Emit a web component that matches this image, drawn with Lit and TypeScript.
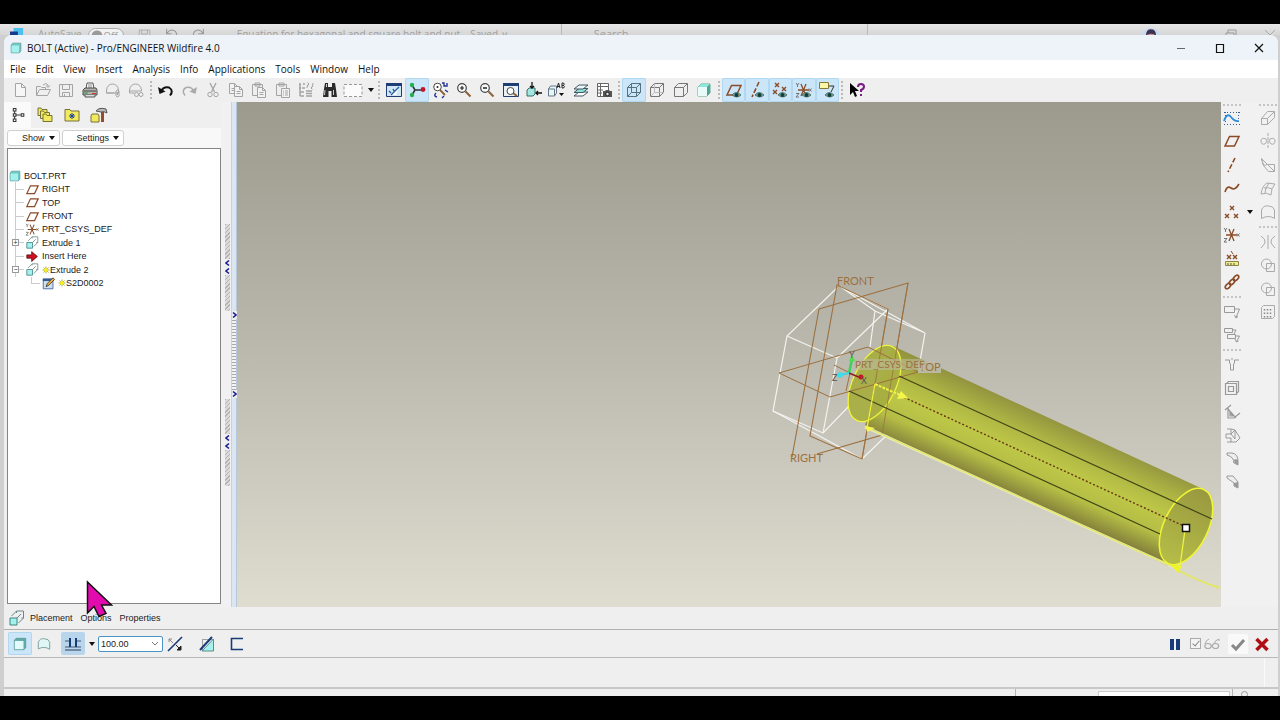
import { LitElement, html, svg, css, SVGTemplateResult, TemplateResult } from "lit";
import { customElement, property } from "lit/decorators.js";

const G = "#a4a4a4";
const BR = "#8a4b26";
const NAVY = "#173a78";

const eye = svg`<path d="M6 13q4-5 9 0q-4 4-9 0z" fill="#7fa39b" stroke="#3d6560" stroke-width=".8"/><circle cx="10.5" cy="13" r="2" fill="#123f38"/>`;
const wire = (c: string) => svg`<path d="M1.500 5.500h9v9h-9zM1.500 5.500l4-4h9l-4 4M14.500 1.500v9l-4 4" fill="none" stroke=${c}/>`;
const cube = (front: string, side: string) => svg`<path d="M1.500 4l2-2.500h11v10.500l-2 2.500h-11z" fill=${side} stroke="#5b9491" stroke-width=".9"/><path d="M2 4.500h10v9.500H2z" fill=${front}/>`;
const plane = svg`<path d="M5.500 3.500h9.500l-4.500 9.500H1z" fill="none" stroke=${BR} stroke-width="1.500"/>`;
const cross = (x: number, y: number) => svg`<path d=${`M${x - 2} ${y - 2}l4 4m0-4l-4 4`} stroke=${BR} stroke-width="1.400"/>`;
const csys = svg`<path d="M2 8h11M5 2l5 12M10 2L5 14" stroke=${BR} stroke-width="1.300" fill="none"/><path d="M0 1l1.500 2L3 1M1.500 3v2M13 6.500l2.500 3m0-3l-2.500 3M0 11.500h3L0 15h3" stroke="#666" fill="none" stroke-width=".9"/>`;
const lens = svg`<path d="M9.500 9.500l5 5" stroke="#8a6238" stroke-width="2"/><circle cx="6" cy="6" r="4.300" fill="#f7fbfb" stroke="#444" stroke-width="1.200"/>`;
const extrude = svg`<path d="M1 8h7v7H1z" fill="#a4f1ee" stroke="#3f8482"/><path d="M2.500 6l5-5h7v7l-5 5M7.500 1v2M14.500 8h-2" fill="none" stroke="#6d8786"/><path d="M8 8l4-4" fill="none" stroke="#6d8786"/>`;
const folder = (x: number, y: number) => svg`<path d=${`M${x} ${y}h3l1 1.500h5v6h-9z`} fill="#f1ea5c" stroke="#77713a"/>`;
const page = (x: number, y: number) => svg`<path d=${`M${x} ${y}h5l3 3v7h-8zM${x + 5} ${y}v3h3M${x + 2} ${y + 5}h4m-4 2h4`} fill="#f2f2f2" stroke=${G}/>`;

const icons: Record<string, SVGTemplateResult> = {
  newFile: svg`<path d="M3.500 1.500h6l4 4v9h-10zM9.500 1.500v4h4" fill="#f6f6f6" stroke=${G}/>`,
  open: svg`<path d="M1.500 13.500v-9h4l1 1h4v2M1.500 13.500l3-6h11l-3 6zM8 3q3-3 5 0v2m-2-1.500l2 2 2-2" fill="none" stroke=${G}/>`,
  save: svg`<path d="M1.500 2.500h13v12h-13zM4.500 2.500v5h7v-5M4.500 14.500v-4h7v4M6.500 12v2" fill="none" stroke=${G}/>`,
  print: svg`<path d="M4 7l1-6h6l1 6" fill="#fff" stroke="#555"/><path d="M6 3h4M6 5h4" stroke="#888"/><path d="M1 8l2-2h11l1 2v5H1z" fill="#b3b3ad" stroke="#4b4b4b"/><path d="M2 9h12" stroke="#444"/><path d="M2 11h4" stroke="#2c9a3a"/><path d="M10 11.500h4" stroke="#d03a2a"/><path d="M3 13v2h10v-2" fill="#ddd" stroke="#555"/>`,
  mailClip: svg`<path d="M1.500 8q1-6 6-6t6 6v3h-12zM1.500 11h8" fill="none" stroke=${G}/><path d="M11 9q2-2 3 0v5q-1 2-3 0zM12.500 10v3" fill="none" stroke=${G}/>`,
  mailLink: svg`<path d="M1.500 8q1-6 6-6t6 6v1h-12zM1.500 9v2h5" fill="none" stroke=${G}/><circle cx="8.500" cy="12.500" r="2" fill="none" stroke=${G}/><circle cx="13" cy="12.500" r="2" fill="none" stroke=${G}/>`,
  undo: svg`<path d="M3 9q3-5 8-3.500q5 3 1 8" fill="none" stroke="#111" stroke-width="2"/><path d="M0 5l1.500 7 6-2.500z" fill="#111"/>`,
  redo: svg`<path d="M13 9q-3-5-8-3.500q-5 3-1 8" fill="none" stroke="#aaa" stroke-width="1.500"/><path d="M16 5l-1.500 7-6-2.500z" fill="#aaa"/>`,
  undoThin: svg`<path d="M2 1v6h6M2 7q4-6 9-4t2 9l-4 4" fill="none" stroke="#999" stroke-width="1.300"/>`,
  redoThin: svg`<path d="M14 1v6H8M14 7q-4-6-9-4t-2 9l4 4" fill="none" stroke="#999" stroke-width="1.300"/>`,
  cut: svg`<path d="M5 1l4.500 9M11 1L6.500 10" stroke=${G} stroke-width="1.300"/><circle cx="5" cy="12.500" r="2.200" fill="none" stroke=${G}/><circle cx="11" cy="12.500" r="2.200" fill="none" stroke=${G}/>`,
  copy: svg`${page(1.5, 1.5)}${page(6.5, 4.5)}`,
  paste: svg`<path d="M1.500 2.500h10v11h-10zM4 1h5v3H4z" fill="#eee" stroke=${G}/>${page(6.5, 5.5)}`,
  pasteSp: svg`<path d="M1.500 2.500h10v11h-10zM4 1h5v3H4z" fill="#eee" stroke=${G}/><path d="M6.500 6.500h8v9h-8zM8 9h1m1 0h3M8 11h1m1 0h3M8 13h1m1 0h3" fill="#f2f2f2" stroke=${G}/>`,
  regen: svg`<path d="M1 2h2m2 0h2M1 6h2m1 0h3M2 2v12M2 10h4M2 14h4" stroke=${G} stroke-width="1.500"/><path d="M8 9h6M8 11.500h6M8 14h6" stroke=${G} stroke-width="1.300"/><path d="M9 6q0-4 2-4m-1.500-1.500L11 2 9.500 4M15 1q0 5-2 5m1.500-2L13 6l1.500 1.500" fill="none" stroke=${G}/>`,
  find: svg`<path d="M3 1h3v4h4V1h3l1 6 1 8H9.500V9h-3v6H1l1-8z" fill="#2b2b2b"/><path d="M3 8l-.5 5M11.500 8v5M4.500 2v3" stroke="#ccc"/>`,
  marquee: svg`<path d="M-1 2.500h18v12H-1z" fill="#fbfbfb" stroke="#999" stroke-dasharray="3 2"/>`,
  repaint: svg`<path d="M.500 1.500h15v13H.500z" fill="#cfe6f7" stroke="#1e3d75"/><path d="M0 1h16v3H0z" fill="#1e3d75"/><path d="M4 13l9-8-3 8z" fill="#fff"/><path d="M5 13l8-8M3 9l2 2m2-4l1 2" stroke="#2a5ea2" stroke-width="1.400"/>`,
  spin: svg`<path d="M3 3l3 5-3 5M6 8h8" fill="none" stroke="#333" stroke-width="1.600"/><circle cx="3" cy="3" r="2.200" fill="#24b14b"/><circle cx="3" cy="13" r="2.200" fill="#24b14b"/><circle cx="14" cy="7.500" r="2.400" fill="#c01828"/>`,
  orient: svg`<path d="M8 8l5 5" stroke="#8a6238" stroke-width="1.800"/><circle cx="5.500" cy="5" r="3.800" fill="#fff" stroke="#444"/><circle cx="5.500" cy="5" r="1" fill="#222"/><path d="M10 1h2v3h3V1M5 15q-4-1-1-4m6 5l2-2m1-6l3 2" stroke="#23349a" stroke-width="1.400" fill="none"/>`,
  zoomIn: svg`${lens}<path d="M4 6h4M6 4v4" stroke="#222" stroke-width="1.200"/>`,
  zoomOut: svg`${lens}<path d="M4 6h4" stroke="#222" stroke-width="1.400"/>`,
  refit: svg`<path d="M.500 1.500h15v13H.500z" fill="#e9f1f4" stroke="#1e3d75"/><path d="M0 1h16v3H0z" fill="#1e3d75"/><path d="M10 11l4 3" stroke="#8a6238" stroke-width="2"/><circle cx="7.500" cy="9" r="3.500" fill="#fff" stroke="#444"/>`,
  reorient: svg`<path d="M1 8l2-2h6v6l-2 2H1z" fill="#a4e6e0" stroke="#356f6b"/><path d="M6 0v6M4 4l2 2 2-2M16 11h-6m2-2l-2 2 2 2" stroke="#111" stroke-width="1.300" fill="none"/>`,
  views: svg`<path d="M-.500 7l2-3h6v7l-2 3h-6zM-.500 7h6v7" fill="#e6f6f4" stroke="#678"/><path d="M8 6l1.500-5L11 6M8.500 4.500h2M13 1v5h1.500q2-1.500 0-2.500 1.500-1.500 0-2.500zM13 3.500h2" stroke="#222" fill="none" stroke-width="1"/><path d="M10 11h5l-2.500 3z" fill="#111"/>`,
  layers: svg`<path d="M1 14l5-4h9l-5 4z" fill="#fff" stroke="#456"/><path d="M1 10.500l5-4h9l-5 4z" fill="#8de0d4" stroke="#456"/><path d="M1 7l5-4h9l-5 4z" fill="#e9f8f6" stroke="#456"/>`,
  viewMgr: svg`<path d="M1.500 1.500h11v13h-11zM1 4.500h11M4.500 1v13M1 8h6M1 11h5" fill="#fff" stroke="#666"/><path d="M7 9h2l1-1h3l1 1h2v6H7z" fill="#555"/><circle cx="11.500" cy="12" r="1.800" fill="#ddd" stroke="#222"/>`,
  wireframe: svg`${wire("#56707c")}<path d="M5.500 1.500v9h9M1.500 14.500l4-4" fill="none" stroke="#56707c"/>`,
  hidden: svg`${wire("#777")}<path d="M5.500 1.500v9h9M1.500 14.500l4-4" fill="none" stroke="#bbb"/>`,
  noHidden: wire("#777"),
  shaded: svg`<path d="M2 5l3-3h9v9l-3 3H2z" fill="#49a59c" stroke="#6a8"/><path d="M2 5l3-3h9l-3 3z" fill="#8ce8dd"/><path d="M2 5h9v9H2z" fill="#e9fbf9"/>`,
  planeEye: svg`${plane}${eye}`,
  axisEye: svg`<path d="M10 0L3 15" stroke=${BR} stroke-width="1.600" stroke-dasharray="5 2"/>${eye}`,
  pointEye: svg`${cross(5, 3)}${cross(3, 10)}${cross(12, 7)}${eye}`,
  csysEye: svg`${csys}${eye}`,
  noteEye: svg`<path d="M.500 .500h9v6h-9z" fill="#fbf7a6" stroke="#8a7a3a"/><path d="M10 4h5l-3 6" stroke="#333" fill="none"/>${eye}`,
  help: svg`<path d="M1 1v12l3-3 2 5 2-1-2-5h4z" fill="#000"/><path d="M9 5q0-3 3-3t3 2.500-3 3.500v2M12 12v2" fill="none" stroke="#7a1b86" stroke-width="2"/>`,
  sketch: svg`<path d="M0 2.500h16M0 14.500h16M1.500 2v12M14.500 2v12" stroke="#3a5f8c" stroke-dasharray="1 2"/><path d="M0 11q3-9 7-4t8 4" fill="none" stroke="#2b8adb" stroke-width="1.800"/>`,
  plane,
  axis: svg`<path d="M11 1L4 15" stroke=${BR} stroke-width="1.600" stroke-dasharray="5 2"/>`,
  curve: svg`<path d="M1 12q2-7 6-4t8-4" fill="none" stroke=${BR} stroke-width="1.600"/>`,
  points: svg`${cross(8, 4)}${cross(3, 12)}${cross(12, 12)}`,
  csys,
  analysis: svg`${cross(5, 6)}${cross(11, 6)}<path d="M7 0l2 3" stroke=${BR}/><path d="M1.500 10.500h13v4h-13z" fill="#f0ee86" stroke="#8a8448"/><path d="M4 12v2m3-2v2m3-2v2" stroke="#555"/>`,
  chain: svg`<g fill="none" stroke=${BR} stroke-width="1.600"><ellipse cx="4" cy="12" rx="3.300" ry="2" transform="rotate(-45 4 12)"/><ellipse cx="8" cy="8" rx="3.300" ry="2" transform="rotate(-45 8 8)"/><ellipse cx="12" cy="4" rx="3.300" ry="2" transform="rotate(-45 12 4)"/></g>`,
  note1: svg`<path d="M.500 2.500h10v6h-10zM10 5h5.500l-3.500 9m-1.500-3l1.500 3 2-1.500" fill="none" stroke="#999"/>`,
  note2: svg`<path d="M.500 1.500h8v4h-8zM3.500 7.500h8v4h-8zM9 3h3l-2 4M12 9h3.500l-3 6m-1.500-3l1.500 3 2-1" fill="none" stroke="#999"/>`,
  hole: svg`<path d="M1 3h4.500v3l1 1v6h3V7l1-1V3H15M8 1v2" fill="none" stroke="#999"/>`,
  shell: svg`<path d="M2.500 3.500l2-2h10v10l-2 2M1.500 3.500h11v11h-11zM4.500 6.500h5v5h-5z" fill="none" stroke="#999" stroke-width="1.200"/>`,
  rib: svg`<path d="M1 6l6-5M4 4v10h6l6-5M4 5l8 9M6 9v3h3z" fill="none" stroke="#999" stroke-width="1.200"/>`,
  draft: svg`<path d="M3 2h4l4 1 5 8-4 4H3M7 2v5l4-4v9L7 7H2v4h5v4" fill="none" stroke="#999"/>`,
  round: svg`<path d="M3 2h5q6 1 6 8v4l-4-2q0-6-7-8zM10 12V9l4 1" fill="#eee" stroke="#999"/><path d="M11 8l3 1v5l-3-2z" fill="#999"/>`,
  chamfer: svg`<path d="M3 2h6l5 6v6l-4-2V9L3 4z" fill="#eee" stroke="#999"/><path d="M10 9l4-1v6l-4-2z" fill="#999"/>`,
  extrudeG: svg`<path d="M1.500 8.500h6v6h-6zM1.500 8.500l6-7h7v6l-7 7M7.500 8.500l7-7" fill="none" stroke="#aaa"/>`,
  revolve: svg`<path d="M8 0v16" stroke="#aaa" stroke-dasharray="3 1"/><path d="M6 6q-5-2-5 2t4 3l2-3zM10 6q5-2 5 2t-4 3l-2-3z" fill="none" stroke="#aaa"/>`,
  sweep: svg`<path d="M1.500 1.500l6 6h7v7h-6l-5-6zM1.500 1.500l2 7M7.500 7.500l-4 1M14.500 14.500l-7-7" fill="none" stroke="#aaa"/>`,
  boundary: svg`<path d="M1 13q1-8 6-11l8 1q-4 4-4 11-4-3-10-1zM4 7q5-1 8 1M9 2q-4 5-4 10" fill="none" stroke="#aaa"/>`,
  style: svg`<path d="M1.500 14.500V6q2-5 7-4 5 0 6 4v8.500q-6-4-13 0z" fill="none" stroke="#aaa"/>`,
  mirror: svg`<path d="M8 1v14" stroke="#aaa"/><path d="M1 2q5 3 4 7l-4 5M15 2q-5 3-4 7l4 5" fill="none" stroke="#aaa"/>`,
  merge: svg`<circle cx="6.500" cy="7" r="5" fill="none" stroke="#aaa"/><path d="M6.500 6.500h8v8h-8z" fill="none" stroke="#aaa"/>`,
  pattern: svg`<path d="M1.500 3.500l2-2h11v11l-2 2h-11z" fill="none" stroke="#aaa"/><path d="M4.500 5v9M7.500 5v9M10.500 5v9" stroke="#888" stroke-width="1.500" stroke-dasharray="1.500 2"/>`,
  model: svg`<g fill="#fff" stroke="#333" stroke-width="1.200"><path d="M3 2v12M4 8h6"/><path d="M1.500 .500h3v3h-3zM1.500 6.500h3v3h-3zM1.500 12.500h3v3h-3zM10.500 6.500h3v3h-3z"/></g>`,
  folders: svg`${folder(1, 1)}${folder(3.5, 4)}${folder(6, 7)}`,
  favorites: svg`<path d="M1 4V2.500h5L7 4h8v10H1z" fill="#f1ea5c" stroke="#77713a"/><path d="M8 6v6M5 9h6M6 7l4 4m0-4l-4 4" stroke="#1c3f92"/>`,
  connect: svg`<path d="M0 9l1-2h6l1 2v6H0z" fill="#f1ea5c" stroke="#77713a"/><path d="M10 4h3v11h-3z" fill="#9a4a2a"/><path d="M5 4q3-4 10-2l1 4q-3-2-6-1z" fill="#bbb" stroke="#555"/>`,
  part: cube("#a4f1ee", "#6dc9c4"),
  extrude,
  insert: svg`<path d="M1 6h6V2l7 6-7 6v-4H1z" fill="#d01020" stroke="#5a0a10"/>`,
  sketchNode: svg`<path d="M1.500 2.500h12v12h-12z" fill="#cfe0f0" stroke="#345a94"/><path d="M1 2h13v3H1z" fill="#345a94"/><path d="M5 12l1.500-4 7-7 2 2-7 7z" fill="#f0b13a" stroke="#333"/>`,
  surface: svg`<path d="M1.500 13.500V6q2-5 7-4 5 0 6 4v8q-6-4-13-.500z" fill="#e1f7f5" stroke="#6f9995"/>`,
  solid: cube("#e2fafa", "#62aaa8"),
  depth: svg`<path d="M0 5h4M12 5h4M0 11h16" stroke="#445a72" stroke-width="1.200"/><path d="M0 14h16" stroke="#445a72" stroke-width="1.200"/><path d="M5 2v9M11 2v9" stroke=${NAVY} stroke-width="2"/>`,
  flip: svg`<path d="M1 15L15 1" stroke=${NAVY} stroke-width="1.600"/><path d="M2 3h3M2 3v3M2 3l4 4" stroke="#888" fill="none"/><path d="M14 10v4h-4zM9 9l4 4" fill="#222" stroke="#222"/>`,
  remove: svg`<path d="M3.500 3.500h11v11h-11z" fill="none" stroke="#555" stroke-dasharray="1 1"/><path d="M14.500 3v12H3z" fill="#a4f1ee" stroke="#5c8f8a"/><path d="M1 14L13 1" stroke=${NAVY} stroke-width="2"/>`,
  thicken: svg`<path d="M14 2.500H2.500v11H14" fill="none" stroke=${NAVY} stroke-width="1.600"/>`,
  pause: svg`<path d="M3 3h4v11H3zM9 3h4v11H9z" fill=${NAVY}/>`,
  glasses: svg`<path d="M1 8q1-4 4-5M10 8q1-4 5-5v2" fill="none" stroke="#aaa"/><ellipse cx="4" cy="10" rx="3.200" ry="2.500" fill="none" stroke="#aaa" stroke-width="1.200"/><ellipse cx="11.500" cy="10" rx="3.200" ry="2.500" fill="none" stroke="#aaa" stroke-width="1.200"/>`,
  accept: svg`<path d="M2 9l4 4 8-9" fill="none" stroke="#888" stroke-width="3"/>`,
  cancel: svg`<path d="M2.500 3l11 11M13.500 3l-11 11" stroke="#b00d14" stroke-width="3.500"/>`,
  person: svg`<circle cx="8" cy="8" r="8" fill="#c9d8f0"/><circle cx="8" cy="7" r="4" fill="#c98f8f"/><path d="M4 6q0-5 4-5t4 5q-4-3-8 0z" fill="#3d3152"/><path d="M3 16q5-6 10 0z" fill="#c07a9a"/>`,
  word: svg`<path d="M4 0h11v15H4z" fill="#4fc0ee"/><path d="M0 4h9v9H0z" fill="#143a8c"/>`,
  min: svg`<path d="M4 8.500h8" stroke="#666"/>`,
  max: svg`<path d="M4.500 4.500h7v8h-7z" fill="none" stroke="#111" stroke-width="1.200"/>`,
  restore: svg`<path d="M3 5h8v8H3zM5 5V2h8v8h-2" fill="none" stroke="#999"/>`,
  close: svg`<path d="M4 4l8 8M12 4l-8 8" stroke="#111" stroke-width="1.200"/>`,
  closeThin: svg`<path d="M3 2l10 10M13 2L3 12" stroke="#aaa"/>`,
  spark: svg`<path d="M8 1v14M1 8h14M3 3l10 10M13 3L3 13" stroke="#8b8a20" stroke-width="1.500"/><circle cx="8" cy="8" r="4" fill="#f4f020"/>`,
};

@customElement("app-icon")
export class AppIcon extends LitElement {
  @property() name = "";
  @property({ type: Number }) size = 16;
  static styles = css`
    :host { display: inline-flex; flex: none; }
    svg { display: block; overflow: visible; }
  `;
  render() {
    return html`<svg width=${this.size} height=${this.size} viewBox="0 0 16 16" aria-hidden="true">${icons[this.name]}</svg>`;
  }
}

const PITCH = 23.4;
type Tool = [icon: string, label: string, on?: boolean];

const topGroups: Tool[][] = [
  [["newFile", "New"], ["open", "Open"], ["save", "Save"], ["print", "Print"], ["mailClip", "Send with attachment"], ["mailLink", "Send with link"]],
  [["undo", "Undo"], ["redo", "Redo"], ["cut", "Cut"], ["copy", "Copy"], ["paste", "Paste"], ["pasteSp", "Paste Special"], ["regen", "Regenerate"], ["find", "Find"], ["marquee", "Select"]],
  [["repaint", "Repaint"], ["spin", "Spin Center", true], ["orient", "Orient Mode"], ["zoomIn", "Zoom In"], ["zoomOut", "Zoom Out"], ["refit", "Refit"], ["reorient", "Reorient"], ["views", "Saved Views"], ["layers", "Layers"], ["viewMgr", "View Manager"]],
  [["wireframe", "Wireframe", true], ["hidden", "Hidden Line"], ["noHidden", "No Hidden"], ["shaded", "Shading"]],
  [["planeEye", "Datum Planes", true], ["axisEye", "Datum Axes", true], ["pointEye", "Datum Points", true], ["csysEye", "Coordinate Systems", true], ["noteEye", "Annotations", true]],
  [["help", "Context Help"]],
];
const sideLeft: Tool[][] = [
  [["sketch", "Sketch"], ["plane", "Plane"], ["axis", "Axis"], ["curve", "Curve"], ["points", "Point"], ["csys", "Coordinate System"], ["analysis", "Analysis"], ["chain", "Reference"]],
  [["note1", "Annotation"], ["note2", "Annotation Feature"]],
  [["hole", "Hole"], ["shell", "Shell"], ["rib", "Rib"], ["draft", "Draft"], ["round", "Round"], ["chamfer", "Chamfer"]],
];
const sideRight: Tool[][] = [
  [["extrudeG", "Extrude"], ["revolve", "Revolve"], ["sweep", "Sweep"], ["boundary", "Boundary Blend"], ["style", "Style"]],
  [["mirror", "Mirror"], ["merge", "Merge"], ["merge", "Trim"], ["pattern", "Pattern"]],
];
const tree: { icon: string; text: string; box?: string; isNew?: boolean; level: number }[] = [
  { icon: "part", text: "BOLT.PRT", level: 0 },
  { icon: "plane", text: "RIGHT", level: 1 },
  { icon: "plane", text: "TOP", level: 1 },
  { icon: "plane", text: "FRONT", level: 1 },
  { icon: "csys", text: "PRT_CSYS_DEF", level: 1 },
  { icon: "extrude", text: "Extrude 1", box: "+", level: 1 },
  { icon: "insert", text: "Insert Here", level: 1 },
  { icon: "extrude", text: "Extrude 2", box: "−", isNew: true, level: 1 },
  { icon: "sketchNode", text: "S2D0002", isNew: true, level: 2 },
];
const menus = ["File", "Edit", "View", "Insert", "Analysis", "Info", "Applications", "Tools", "Window", "Help"];

@customElement("model-view")
export class ModelView extends LitElement {
  static styles = css`
    :host { display: block; min-width: 0; background: linear-gradient(#9c9a8d, #bab8ad 48%, #dfddd0); overflow: hidden; }
    svg { display: block; width: 100%; height: 100%; }
    text { font: 11px Lato, "Open Sans", sans-serif; fill: #9c703f; }
    .csys { font-size: 10px; }
    .axis { font-size: 9px; fill: #555; }
  `;
  render() {
    return html`<svg viewBox="237 102 984 505" preserveAspectRatio="xMaxYMid meet" role="img" aria-label="Bolt model">
      <defs>
        <linearGradient id="body" gradientUnits="userSpaceOnUse" x1="1050" y1="418" x2="1016" y2="495">
          <stop offset="0" stop-color="#94953f"/><stop offset=".28" stop-color="#b0b744"/>
          <stop offset=".5" stop-color="#bdc747"/><stop offset=".75" stop-color="#b5bd45"/><stop offset="1" stop-color="#85833b"/>
        </linearGradient>
        <linearGradient id="cap" x1="1" y1="0" x2="0" y2="0">
          <stop offset="0" stop-color="#98993f"/><stop offset="1" stop-color="#b6bd48"/>
        </linearGradient>
      </defs>
      <g fill="none" stroke="#f3f3f0" stroke-width="1.200">
        <path d="M837 288L787 336L773 411L862 459L888 434M841 287L925 333L917 378M841 287L875 311L925 333M875 311L870 347"/>
        <path d="M787 336L837 358L823 433L773 411M888 309L837 358M823 433L850 405M841 287L888 309"/>
      </g>
      <g fill="none" stroke="#9c703f" stroke-width="1.100">
        <path d="M837 285L888 309L862 459L810 436z"/>
        <path d="M819 309L908 283L882 435L817 454M819 309L792 457"/>
      </g>
      <path d="M893 346L1203 489L1168 566L865 425z" fill="url(#body)"/>
      <ellipse cx="874.500" cy="383.500" rx="41" ry="21.500" transform="rotate(-64 874.500 383.500)" fill="#a7ad42" fill-opacity=".94" stroke="#f0f43c" stroke-width="1.300"/>
      <path d="M779 373L868 347L918 372L830 397zM834 365L850 373L846 391" fill="none" stroke="#9c703f"/>
      <path d="M888 309L862 459M908 283L882 435" fill="none" stroke="#9c703f" opacity=".8"/>
      <path d="M865 427L1180 570" stroke="#e6e8b8" stroke-width="2.500"/>
      <path d="M866 427L1176 568" stroke="#e4ea48" stroke-width="1"/>
      <path d="M1174 568Q1195 580 1220 588" stroke="#e1e765" stroke-width="2" fill="none"/>
      <ellipse cx="1186" cy="526.500" rx="41" ry="22" transform="rotate(-64 1186 526.500)" fill="url(#cap)" stroke="#f0f634" stroke-width="1.500"/>
      <path d="M899 376L1212 519M849 391L1160 534" stroke="#3f4418" stroke-width="1.200"/>
      <path d="M875 384L1186 527" stroke="#6b3414" stroke-width="1.400" stroke-dasharray="2 2"/>
      <path d="M875 384L902 396" stroke="#f5f54a" stroke-width="2" stroke-dasharray="3 1"/>
      <path d="M901 391L908 398L897 399zM866 426l9 2-8 4z" fill="#f5f54a"/>
      <path d="M875 384L867 428M1185 530L1180 566" stroke="#eff33c" stroke-width="1.300"/>
      <path d="M1170 564l12 2-4 7z" fill="#eef42c"/>
      <path d="M1182.500 524.500h7v7h-7z" fill="#fff" stroke="#111" stroke-width="1.500"/>
      <path d="M849 373L852 359" stroke="#39d45a" stroke-width="2.500"/><path d="M849 361l3-6 3 6z" fill="#4be04b"/>
      <path d="M849 373L861 378" stroke="#8a2020" stroke-width="1.500"/><circle cx="861" cy="377" r="2.500" fill="#c81426"/>
      <path d="M849 373L840 375" stroke="#38d8e0" stroke-width="2"/><circle cx="840" cy="375" r="2.800" fill="#38e0ea"/>
      <path d="M918 361h23v12h-23z" fill="#bdbbac" fill-opacity=".9"/>
      <text x="919" y="371">TOP</text>
      <path d="M855 359h70v11h-70z" fill="#bdbb9e" fill-opacity=".6"/>
      <text x="837" y="285">FRONT</text>
      <text class="csys" x="855" y="368">PRT_CSYS_DEF</text>
      <text x="790" y="462">RIGHT</text>
      <text class="axis" x="849" y="358">Y</text><text class="axis" x="832" y="381">Z</text><text class="axis" x="861" y="384">X</text>
    </svg>`;
  }
}

@customElement("app-root")
export class AppRoot extends LitElement {
  static styles = css`
    :host { display: block; height: 100vh; font: 9px/12px "Liberation Sans", Arial, sans-serif; color: #222; }
    * { box-sizing: border-box; }
    button, input { font: inherit; color: inherit; margin: 0; padding: 0; border: 0; background: none; }
    button { display: flex; align-items: center; justify-content: center; }
    .screen { position: relative; height: 100%; padding: 24px 0; background: #000; }
    .desktop { height: 100%; display: flex; flex-direction: column; background: #cfcfcf; overflow: hidden; }
    .behind { height: 11px; flex: none; overflow: hidden; display: flex; align-items: flex-start; gap: 14px; padding: 4px 2px 0 10px; background: linear-gradient(#e6e6e6, #d6d6d6); color: #a0a0a0; font: 10px/12px "Open Sans", sans-serif; }
    .toggle { display: flex; align-items: center; justify-content: flex-end; width: 36px; height: 15px; padding-right: 5px; margin-left: -8px; border: 1px solid #aaa; border-radius: 8px; background: radial-gradient(circle at 8px 7px, #9a9a9a 5px, #f1f1f1 6px); }
    .quick { display: flex; gap: 14px; }
    .doc { margin-left: 18px; width: 325px; padding-right: 10px; border-right: 1px solid #bbb; white-space: nowrap; height: 20px; margin-top: -4px; padding-top: 4px; }
    .search { width: 292px; height: 20px; margin-top: -4px; padding-top: 4px; padding-left: 18px; border-right: 1px solid #bbb; font-size: 11px; }
    .behind .grow { flex: 1; }
    .behind .faded { display: flex; gap: 23px; }
    .window { flex: 1; min-height: 0; display: flex; flex-direction: column; margin: 0 2px 0 4px; background: #efefef; border-radius: 8px 8px 0 0; overflow: hidden; }
    .title { height: 25px; flex: none; display: flex; align-items: center; gap: 5px; padding-left: 6px; background: #edf3f8; color: #111; font: 10px/14px "Open Sans", sans-serif; }
    .title h1 { flex: 1; margin: 0; font: inherit; }
    .winbtns { display: flex; }
    .winbtn { width: 39px; height: 25px; }
    .menu { height: 18px; flex: none; display: flex; align-items: center; gap: 10px; padding-left: 6px; background: #fff; color: #111; font: 10px/14px "Open Sans", sans-serif; }
    .tools { height: 24px; flex: none; display: flex; align-items: center; padding-left: 4px; overflow: hidden; }
    .group { display: grid; grid-auto-flow: column; grid-auto-columns: 1fr; height: 24px; }
    .tool { min-width: 0; min-height: 0; border-radius: 2px; }
    .on { background: #cbe6f9; box-shadow: inset 0 0 0 1px #b2d7f0; }
    .sep { width: 6px; height: 20px; flex: none; background: radial-gradient(circle at 3px 2px, #bbb 1px, transparent 1px) 0 0 / 6px 4px; }
    .caret { width: 11px; height: 16px; flex: none; }
    .caret::after, .drop::after { content: ""; border: 3px solid transparent; border-top: 4px solid #111; border-bottom: 0; }
    .main { flex: 1; min-height: 0; display: grid; grid-template-columns: 217px 16px 1fr 57px; }
    .nav { display: flex; flex-direction: column; min-height: 0; }
    .tabs { height: 26px; flex: none; display: flex; }
    .tabs button { width: 27px; }
    .tabs .active { padding-left: 2px; background: #fafafa; }
    .drops { height: 20px; flex: none; display: flex; align-items: center; gap: 2px; padding: 0 3px; background: #f8f8f8; }
    .drop { height: 16px; padding: 0 4px 0 14px; gap: 4px; background: #fff; border: 1px solid #d0d0d0; border-radius: 3px; }
    .tree { flex: 1; margin: 0 0 3px 3px; padding: 20px 1px 0; list-style: none; background: #fff; border: 1px solid #858585; }
    .rows { display: grid; grid-auto-rows: 1fr; height: 121px; margin: 0; padding: 0; list-style: none; }
    .row { display: flex; align-items: center; gap: 3px; white-space: nowrap; }
    .l1 .stem, .l2 .stem { display: flex; align-items: center; align-self: stretch; flex: none; width: 13px; margin-left: 6px; background: linear-gradient(#ccc, #ccc) 0 0 / 1px 100% no-repeat, linear-gradient(#ccc, #ccc) 0 50% / 9px 1px no-repeat; margin-right: -5px; }
    .l2 .stem { margin-left: 22px; background-size: 1px 50%, 9px 1px; }
    .box { width: 7px; height: 7px; margin-left: -3px; border: 1px solid #999; background: #fff; font-size: 7px; line-height: 5px; text-align: center; color: #224; }
    .name { display: flex; align-items: center; }
    .split { display: flex; padding-left: 4px; justify-content: space-between; background: #f1f1f3; }
    .track { width: 5px; display: flex; flex-direction: column; align-items: center; justify-content: center; gap: 88px; }
    .hatch { width: 5px; height: 87px; display: flex; flex-direction: column; align-items: center; justify-content: center; background: repeating-linear-gradient(135deg, #b4b4b4 0 1px, #dadada 1px 3px); }
    .sash { width: 6px; display: flex; flex-direction: column; align-items: center; justify-content: center; background: #dce6f1; border-left: 1px solid #c4d2e4; border-right: 1px solid #b8c8dc; }
    .grip { width: 4px; height: 87px; display: flex; flex-direction: column; justify-content: space-between; align-items: center; background: repeating-linear-gradient(#aaa 0 1px, #f3f3f5 1px 3px); }
    .arrow { display: block; flex: none; background: #eee; }
    .side { display: flex; justify-content: space-between; padding-left: 1px; background: #f1f1f1; }
    .col { width: 20px; display: flex; flex-direction: column; align-items: stretch; }
    .vgroup { display: grid; grid-auto-rows: 1fr; }
    .hsep { height: 6px; flex: none; background: radial-gradient(circle at 2px 3px, #c4c4c4 1px, transparent 1px) 0 0 / 4px 6px; }
    .hsep.first { height: 4px; }
    .more { padding-top: 102px; }
    .slots { height: 23px; flex: none; display: flex; align-items: center; padding-left: 5px; border-bottom: 1px solid #b0b0b0; }
    .slots button { margin-left: 5px; margin-right: 3px; }
    .dash { height: 28px; flex: none; display: flex; align-items: center; padding: 0 4px; border-bottom: 1px solid #b8b8b8; }
    .dash button { width: 24px; height: 23px; border-radius: 2px; }
    .dash .press { background: #b9d5ec; margin-left: 5px; }
    .dash .pressgap { margin-left: 5px; }
    .dash .caret { width: 13px; }
    .combo { display: flex; align-items: center; width: 65px; height: 16px; background: #fff; border: 1px solid #4a94c8; border-radius: 2px; }
    .combo input { width: 49px; padding-left: 2px; outline: none; }
    .dash .combo button { width: 14px; height: 14px; }
    .dash .wide { width: 30px; }
    .spacer { flex: 1; }
    .check { appearance: none; width: 11px; height: 11px; margin: 0 3px; border: 1px solid #aaa; background: #f4f4f4; position: relative; }
    .check:checked::after { content: ""; position: absolute; left: 3px; top: 0; width: 3px; height: 6px; border: solid #888; border-width: 0 1px 1px 0; transform: rotate(40deg); }
    .dash .ok { background: #f9f9f9; width: 20px; height: 20px; margin: 0 2px 0 8px; }
    .preview { display: flex; align-items: center; }
    .msg { height: 29px; flex: none; margin-right: 13px; border-right: 1px solid #fafafa; }
    .status { height: 9px; flex: none; display: flex; border-top: 2px solid #c8c8c8; }
    .status .info { flex: 1; border-right: 1px solid #b5b5b5; }
    .status .filter { width: 217px; padding: 2px 2px 0 82px; border-right: 1px solid #b5b5b5; }
    .status .field { height: 5px; background: #fff; border: 1px solid #ccc; border-bottom: 0; }
    .status .lamp { width: 45px; padding: 2px 0 0 8px; }
    .status .lamp::before { content: ""; display: block; width: 5px; height: 5px; border: 1px solid #999; border-radius: 50%; }
    .cursor { position: absolute; left: 86px; top: 580px; pointer-events: none; }
  `;

  private tool([icon, label, on]: Tool): TemplateResult {
    return html`<button class="tool ${on ? "on" : ""}" aria-label=${label}><app-icon name=${icon}></app-icon></button>`;
  }
  private topGroup(g: Tool[], i: number) {
    return html`${i ? html`<span class="sep"></span>` : ""}
      <div class="group" style="width:${Math.round(g.length * PITCH)}px">${g.map((t) => this.tool(t))}</div>
      ${i === 1 ? html`<button class="caret" aria-label="Selection options"></button>` : ""}`;
  }
  private column(groups: Tool[][]) {
    return html`<div class="col">${groups.map((g, i) => html`<span class="hsep ${i ? "" : "first"}"></span>
      <div class="vgroup" style="height:${Math.round(g.length * 23.5)}px">${g.map((t) => this.tool(t))}</div>`)}</div>`;
  }
  private arrow(left: boolean) {
    return html`<svg class="arrow" width="5" height="8" viewBox="0 0 5 8"><path d=${left ? "M4 1.500L1 4l3 2.500" : "M1 1.500L4 4 1 6.500"} fill="none" stroke="#1c1c90" stroke-width="1.600"/></svg>`;
  }

  render() {
    return html`<div class="screen">
      <div class="desktop">
        <div class="behind">
          <app-icon name="word" size="14"></app-icon><span>AutoSave</span><span class="toggle">Off</span>
          <span class="quick"><app-icon name="save" size="13"></app-icon><app-icon name="undoThin" size="13"></app-icon><app-icon name="redoThin" size="13"></app-icon></span>
          <span class="doc">Equation for hexagonal and square bolt and nut – Saved ∨</span>
          <span class="search">Search</span><span class="grow"></span>
          <span class="faded"><app-icon name="person" size="20"></app-icon><app-icon name="min"></app-icon><app-icon name="restore"></app-icon><app-icon name="closeThin"></app-icon></span>
        </div>
        <div class="window">
          <header class="title"><app-icon name="part" size="12"></app-icon><h1>BOLT (Active) - Pro/ENGINEER Wildfire 4.0</h1>
            <div class="winbtns">
              <button class="winbtn" aria-label="Minimize"><app-icon name="min"></app-icon></button>
              <button class="winbtn" aria-label="Maximize"><app-icon name="max"></app-icon></button>
              <button class="winbtn" aria-label="Close"><app-icon name="close"></app-icon></button>
            </div>
          </header>
          <nav class="menu">${menus.map((m) => html`<button>${m}</button>`)}</nav>
          <div class="tools">${topGroups.map((g, i) => this.topGroup(g, i))}</div>
          <div class="main">
            <aside class="nav">
              <div class="tabs">
                <button class="active" aria-label="Model Tree"><app-icon name="model" size="14"></app-icon></button>
                <button aria-label="Folder Browser"><app-icon name="folders"></app-icon></button>
                <button aria-label="Favorites"><app-icon name="favorites"></app-icon></button>
                <button aria-label="Connections"><app-icon name="connect"></app-icon></button>
              </div>
              <div class="drops"><button class="drop">Show</button><button class="drop">Settings</button></div>
              <div class="tree"><ul class="rows">${tree.map((n) => html`<li class="row l${n.level}">
                ${n.level ? html`<span class="stem">${n.box ? html`<span class="box">${n.box}</span>` : ""}</span>` : ""}
                <app-icon name=${n.icon} size=${n.level ? 13 : 12}></app-icon>
                <span class="name">${n.isNew ? html`<app-icon name="spark" size="8"></app-icon>` : ""}${n.text}</span></li>`)}</ul></div>
            </aside>
            <div class="split">
              <div class="track"><div class="hatch">${this.arrow(true)}${this.arrow(true)}</div><div class="hatch">${this.arrow(true)}${this.arrow(true)}</div></div>
              <div class="sash"><div class="grip">${this.arrow(false)}${this.arrow(false)}</div></div>
            </div>
            <model-view></model-view>
            <div class="side">${this.column(sideLeft)}<div class="more"><button class="caret" aria-label="More points"></button></div>${this.column(sideRight)}</div>
          </div>
          <div class="slots"><app-icon name="extrude"></app-icon><button>Placement</button><button>Options</button><button>Properties</button></div>
          <div class="dash">
            <button class="on" aria-label="Solid"><app-icon name="solid" size="14"></app-icon></button>
            <button aria-label="Surface"><app-icon name="surface" size="14"></app-icon></button>
            <button class="press" aria-label="Depth"><app-icon name="depth"></app-icon></button>
            <button class="caret" aria-label="Depth options"></button>
            <div class="combo"><input aria-label="Depth value" value="100.00"><button aria-label="Recent values"><svg width="8" height="6" viewBox="0 0 8 6"><path d="M1 1l3 3 3-3" fill="none" stroke="#777"/></svg></button></div>
            <button aria-label="Flip"><app-icon name="flip"></app-icon></button>
            <button class="wide pressgap" aria-label="Remove Material"><app-icon name="remove"></app-icon></button>
            <button class="wide" aria-label="Thicken"><app-icon name="thicken"></app-icon></button>
            <span class="spacer"></span>
            <button aria-label="Pause"><app-icon name="pause"></app-icon></button>
            <label class="preview"><input class="check" type="checkbox" checked aria-label="Preview"><app-icon name="glasses"></app-icon></label>
            <button class="ok" aria-label="Accept"><app-icon name="accept"></app-icon></button>
            <button aria-label="Cancel"><app-icon name="cancel"></app-icon></button>
          </div>
          <div class="msg"></div>
          <div class="status"><div class="info"></div><div class="filter"><div class="field"></div></div><div class="lamp"></div></div>
        </div>
      </div>
      <svg class="cursor" width="28" height="40" viewBox="0 0 28 40"><path d="M1.500 2v31l6.500-6.500 5 10 7-3-4.500-8.500h10z" fill="#e20cae" stroke="#111" stroke-width="1.500"/></svg>
    </div>`;
  }
}
